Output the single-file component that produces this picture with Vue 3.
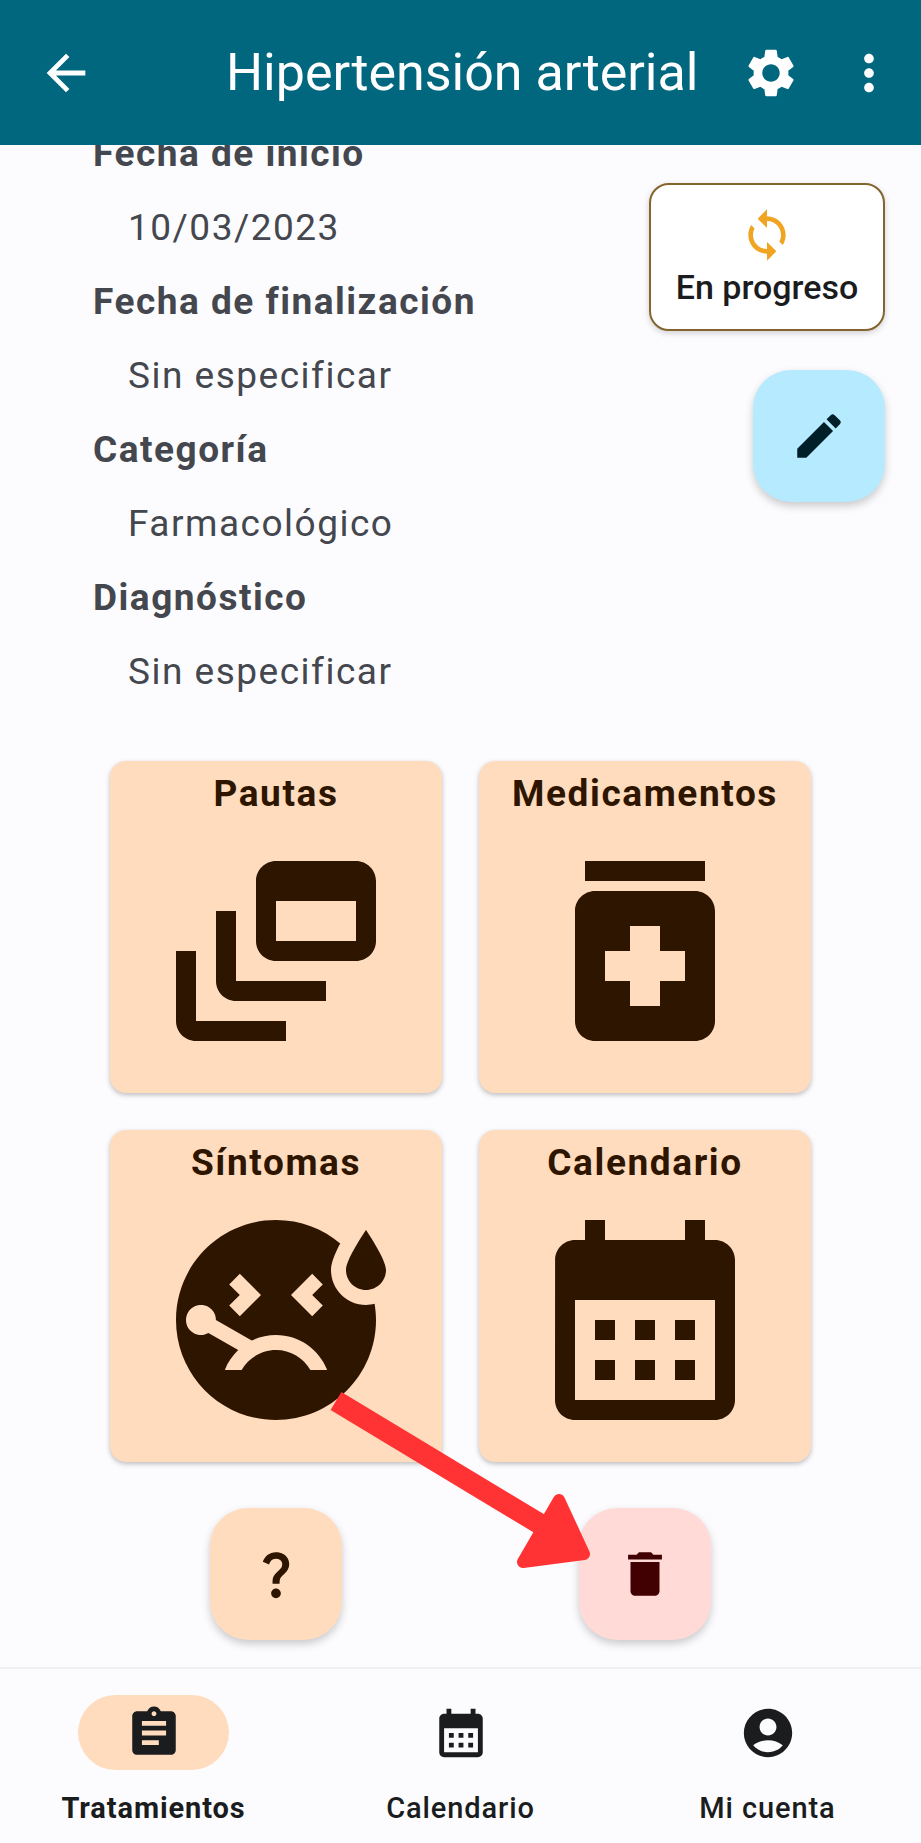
<script setup>
const icons = {
  back: "M20 11H7.83l5.59-5.59L12 4l-8 8 8 8 1.41-1.41L7.83 13H20v-2z",
  settings: "M19.14 12.94c.04-.3.06-.61.06-.94 0-.32-.02-.64-.07-.94l2.03-1.58c.18-.14.23-.41.12-.61l-1.92-3.32c-.12-.22-.37-.29-.59-.22l-2.39.96c-.5-.38-1.03-.7-1.62-.94l-.36-2.54c-.04-.24-.24-.41-.48-.41h-3.84c-.24 0-.43.17-.47.41l-.36 2.54c-.59.24-1.13.57-1.62.94l-2.39-.96c-.22-.08-.47 0-.59.22L2.74 8.87c-.12.21-.08.47.12.61l2.03 1.58c-.05.3-.09.63-.09.94s.02.64.07.94l-2.03 1.58c-.18.14-.23.41-.12.61l1.92 3.32c.12.22.37.29.59.22l2.39-.96c.5.38 1.03.7 1.62.94l.36 2.54c.05.24.24.41.48.41h3.84c.24 0 .44-.17.47-.41l.36-2.54c.59-.24 1.13-.56 1.62-.94l2.39.96c.22.08.47 0 .59-.22l1.92-3.32c.12-.22.07-.47-.12-.61l-2.01-1.58zM12 15.6c-1.98 0-3.6-1.62-3.6-3.6s1.62-3.6 3.6-3.6 3.6 1.62 3.6 3.6-1.62 3.6-3.6 3.6z",
  more: "M12 8c1.1 0 2-.9 2-2s-.9-2-2-2-2 .9-2 2 .9 2 2 2zm0 2c-1.1 0-2 .9-2 2s.9 2 2 2 2-.9 2-2-.9-2-2-2zm0 6c-1.1 0-2 .9-2 2s.9 2 2 2 2-.9 2-2-.9-2-2-2z",
  sync: "M12 4V1L8 5l4 4V6c3.31 0 6 2.69 6 6 0 1.01-.25 1.97-.7 2.8l1.46 1.46C19.54 15.03 20 13.57 20 12c0-4.42-3.58-8-8-8zm0 14c-3.31 0-6-2.69-6-6 0-1.01.25-1.97.7-2.8L5.24 7.74C4.46 8.97 4 10.43 4 12c0 4.42 3.58 8 8 8v3l4-4-4-4v3z",
  edit: "M3 17.25V21h3.75L17.81 9.94l-3.75-3.75L3 17.25zM20.71 7.04c.39-.39.39-1.02 0-1.41l-2.34-2.34c-.39-.39-1.02-.39-1.41 0l-1.83 1.83 3.75 3.75 1.83-1.83z",
  feed: "M8 8H6v7c0 1.1.9 2 2 2h9v-2H8V8z M20 3h-8c-1.1 0-2 .9-2 2v6c0 1.1.9 2 2 2h8c1.1 0 2-.9 2-2V5c0-1.1-.9-2-2-2zm0 8h-8V7h8v4z M4 12H2v7c0 1.1.9 2 2 2h9v-2H4v-7z",
  medication: "M6 3h12v2H6zm11 3H7c-1.1 0-2 .9-2 2v11c0 1.1.9 2 2 2h10c1.1 0 2-.9 2-2V8c0-1.1-.9-2-2-2zm-1 9h-2.5v2.5h-3V15H8v-3h2.5V9.5h3V12H16v3z",
  sick: "M21 9c-1.1 0-2-.9-2-2c0-1.1 2-4 2-4s2 2.9 2 4C23 8.1 22.1 9 21 9z M17.5 7c0-.73.41-1.71.92-2.66C16.68 2.88 14.44 2 11.99 2C6.47 2 2 6.48 2 12c0 5.52 4.47 10 9.99 10C17.52 22 22 17.52 22 12c0-.55-.06-1.09-.14-1.62C21.58 10.45 21.3 10.5 21 10.5C19.07 10.5 17.5 8.93 17.5 7z M15.62 7.38l1.06 1.06L15.62 9.5l1.06 1.06l-1.06 1.06L13.5 9.5L15.62 7.38z M7.32 8.44l1.06-1.06L10.5 9.5l-2.12 2.12l-1.06-1.06L8.38 9.5L7.32 8.44z M15.44 17c-.69-1.19-1.97-2-3.44-2s-2.75.81-3.44 2H6.88c.3-.76.76-1.43 1.34-1.99L5.24 13.3c-.45.26-1.01.28-1.49 0c-.72-.41-.96-1.33-.55-2.05c.41-.72 1.33-.96 2.05-.55c.48.28.74.77.74 1.29l3.58 2.07c.73-.36 1.55-.56 2.43-.56c2.33 0 4.32 1.45 5.12 3.5H15.44z",
  calendar: "M19 4h-1V2h-2v2H8V2H6v2H5c-1.11 0-1.99.9-1.99 2L3 20c0 1.1.89 2 2 2h14c1.1 0 2-.9 2-2V6c0-1.1-.9-2-2-2zm0 16H5V10h14v10zM9 14H7v-2h2v2zm4 0h-2v-2h2v2zm4 0h-2v-2h2v2zm-8 4H7v-2h2v2zm4 0h-2v-2h2v2zm4 0h-2v-2h2v2z",
  help: "M11.07 12.85c.77-1.39 2.25-2.21 3.11-3.44.91-1.29.4-3.7-2.18-3.7-1.69 0-2.52 1.28-2.87 2.34L6.54 6.96C7.25 4.83 9.18 3 11.99 3c2.35 0 3.96 1.07 4.78 2.41.7 1.15 1.11 3.3.03 4.9-1.2 1.77-2.35 2.31-2.97 3.45-.25.46-.35.76-.35 2.24h-2.89c-.01-.78-.13-2.05.48-3.15zM14 20c0 1.1-.9 2-2 2s-2-.9-2-2 .9-2 2-2 2 .9 2 2z",
  trash: "M6 19c0 1.1.9 2 2 2h8c1.1 0 2-.9 2-2V7H6v12zM19 4h-3.5l-1-1h-5l-1 1H5v2h14V4z",
  assignment: "M19 3h-4.18C14.4 1.84 13.3 1 12 1c-1.3 0-2.4.84-2.82 2H5c-1.1 0-2 .9-2 2v14c0 1.1.9 2 2 2h14c1.1 0 2-.9 2-2V5c0-1.1-.9-2-2-2zm-7 0c.55 0 1 .45 1 1s-.45 1-1 1-1-.45-1-1 .45-1 1-1zm2 14H7v-2h7v2zm3-4H7v-2h10v2zm0-4H7V7h10v2z",
  account: "M12 2C6.48 2 2 6.48 2 12s4.48 10 10 10 10-4.48 10-10S17.52 2 12 2zm0 4c1.93 0 3.5 1.57 3.5 3.5S13.93 13 12 13s-3.5-1.57-3.5-3.5S10.07 6 12 6zm0 14c-2.03 0-4.43-.82-6.14-2.88C7.55 15.8 9.68 15 12 15s4.45.8 6.14 2.12C16.43 19.18 14.03 20 12 20z",
};

const details = [
  { label: "Fecha de inicio", value: "10/03/2023" },
  { label: "Fecha de finalización", value: "Sin especificar" },
  { label: "Categoría", value: "Farmacológico" },
  { label: "Diagnóstico", value: "Sin especificar" },
];

const cards = [
  { title: "Pautas", icon: icons.feed },
  { title: "Medicamentos", icon: icons.medication },
  { title: "Síntomas", icon: icons.sick },
  { title: "Calendario", icon: icons.calendar },
];

const tabs = [
  { label: "Tratamientos", icon: icons.assignment, active: true },
  { label: "Calendario", icon: icons.calendar, active: false },
  { label: "Mi cuenta", icon: icons.account, active: false },
];
</script>

<template>
  <div class="page">
    <header class="topbar">
      <svg class="icon" viewBox="0 0 24 24"><path :d="icons.back" /></svg>
      <h1 class="title">Hipertensión arterial</h1>
      <div class="topbar-actions">
        <svg class="icon" viewBox="0 0 24 24"><path :d="icons.settings" /></svg>
        <svg class="icon" viewBox="0 0 24 24"><path :d="icons.more" /></svg>
      </div>
    </header>

    <main class="content">
      <div class="scrolled">
        <section class="info">
          <dl class="details">
            <template v-for="item in details" :key="item.label">
              <dt>{{ item.label }}</dt>
              <dd>{{ item.value }}</dd>
            </template>
          </dl>
          <div class="side">
            <div class="status">
              <svg class="icon sync" viewBox="0 0 24 24"><path :d="icons.sync" /></svg>
              <span>En progreso</span>
            </div>
            <button class="fab fab-edit">
              <svg class="icon" viewBox="0 0 24 24"><path :d="icons.edit" /></svg>
            </button>
          </div>
        </section>

        <section class="grid cards">
          <div v-for="card in cards" :key="card.title" class="card">
            <h2>{{ card.title }}</h2>
            <svg class="card-icon" viewBox="0 0 24 24"><path :d="card.icon" /></svg>
          </div>
        </section>

        <section class="grid actions">
          <button class="fab fab-help">
            <svg class="icon" viewBox="0 0 24 24"><path :d="icons.help" /></svg>
          </button>
          <button class="fab fab-delete">
            <svg class="icon" viewBox="0 0 24 24"><path :d="icons.trash" /></svg>
          </button>
        </section>
      </div>
    </main>

    <nav class="tabs">
      <div v-for="tab in tabs" :key="tab.label" class="tab" :class="{ active: tab.active }">
        <div class="pill">
          <svg class="icon" viewBox="0 0 24 24"><path :d="tab.icon" /></svg>
        </div>
        <span>{{ tab.label }}</span>
      </div>
    </nav>

    <!-- flecha roja puesta encima de la captura -->
    <svg class="arrow" viewBox="0 0 921 1843">
      <path d="M336 1401L540 1524" fill="none" stroke="#ff3333" stroke-width="21" />
      <path d="M559 1500L584 1554L523 1562Z" fill="#ff3333" stroke="#ff3333" stroke-width="12" stroke-linejoin="round" />
    </svg>
  </div>
</template>

<style scoped>
.page {
  position: relative;
  width: 921px;
  height: 1843px;
  display: flex;
  flex-direction: column;
  overflow: hidden;
  background: #fcfcff;
  font-family: Roboto, "Liberation Sans", sans-serif;
  color: #1a1c1e;
}

.icon {
  display: block;
  width: 58px;
  height: 58px;
  flex: none;
  fill: currentColor;
}

.topbar {
  height: 145px;
  flex: none;
  display: flex;
  align-items: center;
  padding-left: 37px;
  padding-right: 23px;
  box-sizing: border-box;
  background: #00677f;
  color: #fff;
}

.title {
  margin: 0 0 0 131px;
  font-size: 52px;
  font-weight: 400;
  line-height: 60px;
  white-space: nowrap;
}

.topbar-actions {
  margin-left: auto;
  display: flex;
  gap: 40px;
}

.content {
  flex: 1;
  min-height: 0;
  overflow: hidden;
}

.scrolled {
  margin-top: -28px;
}

.info {
  display: flex;
  justify-content: space-between;
  padding: 0 36px 0 93px;
}

.details {
  margin: 0;
}

.details dt,
.details dd {
  height: 74px;
  line-height: 74px;
  font-size: 37px;
  letter-spacing: 1.5px;
  white-space: nowrap;
  color: #44474e;
}

.details dt {
  font-weight: 700;
}

.details dd {
  margin: 0 0 0 35px;
}

.side {
  display: flex;
  flex-direction: column;
  align-items: flex-end;
  gap: 39px;
  padding-top: 66px;
}

.status {
  width: 236px;
  height: 148px;
  box-sizing: border-box;
  display: flex;
  flex-direction: column;
  align-items: center;
  padding-top: 22px;
  border: 2px solid #84652f;
  border-radius: 20px;
  background: #fff;
  box-shadow: 0 2px 6px rgba(0, 0, 0, 0.18);
  font-size: 34px;
  font-weight: 500;
  line-height: 38px;
  white-space: nowrap;
}

.sync {
  color: #f0a422;
  width: 56px;
  height: 56px;
  margin-bottom: 5px;
}

.fab {
  width: 132px;
  height: 132px;
  padding: 0;
  border: none;
  border-radius: 38px;
  display: flex;
  align-items: center;
  justify-content: center;
  box-shadow: 0 4px 8px rgba(0, 0, 0, 0.2);
}

.fab-edit {
  background: #b5eaff;
  color: #001f29;
}

.fab-help {
  background: #ffdcbe;
  color: #2e1500;
}

.fab-delete {
  background: #ffdad6;
  color: #410002;
}

.grid {
  display: grid;
  grid-template-columns: 332px 332px;
  column-gap: 37px;
  padding-left: 110px;
}

.cards {
  row-gap: 37px;
  margin-top: 52px;
}

.card {
  height: 332px;
  box-sizing: border-box;
  padding-top: 12px;
  border-radius: 16px;
  background: #ffdcbe;
  color: #2e1500;
  box-shadow: 0 2px 5px rgba(0, 0, 0, 0.25);
  text-align: center;
}

.card h2 {
  margin: 0;
  font-size: 37px;
  font-weight: 700;
  line-height: 42px;
  letter-spacing: 1.6px;
}

.card-icon {
  display: block;
  width: 240px;
  height: 240px;
  margin: 16px auto 0;
  fill: currentColor;
}

.actions {
  margin-top: 46px;
  justify-items: center;
}

.tabs {
  height: 176px;
  flex: none;
  box-sizing: border-box;
  display: grid;
  grid-template-columns: repeat(3, 1fr);
  border-top: 2px solid #eef0f3;
}

.tab {
  display: flex;
  flex-direction: column;
  align-items: center;
  padding-top: 26px;
  font-size: 29px;
  font-weight: 500;
  line-height: 36px;
  letter-spacing: 0.9px;
  white-space: nowrap;
}

.tab.active {
  font-weight: 700;
}

.pill {
  width: 151px;
  height: 75px;
  margin-bottom: 20px;
  border-radius: 38px;
  display: flex;
  align-items: center;
  justify-content: center;
}

.tab.active .pill {
  background: #ffdcbe;
}

.arrow {
  position: absolute;
  left: 0;
  top: 0;
  width: 921px;
  height: 1843px;
  pointer-events: none;
}
</style>
